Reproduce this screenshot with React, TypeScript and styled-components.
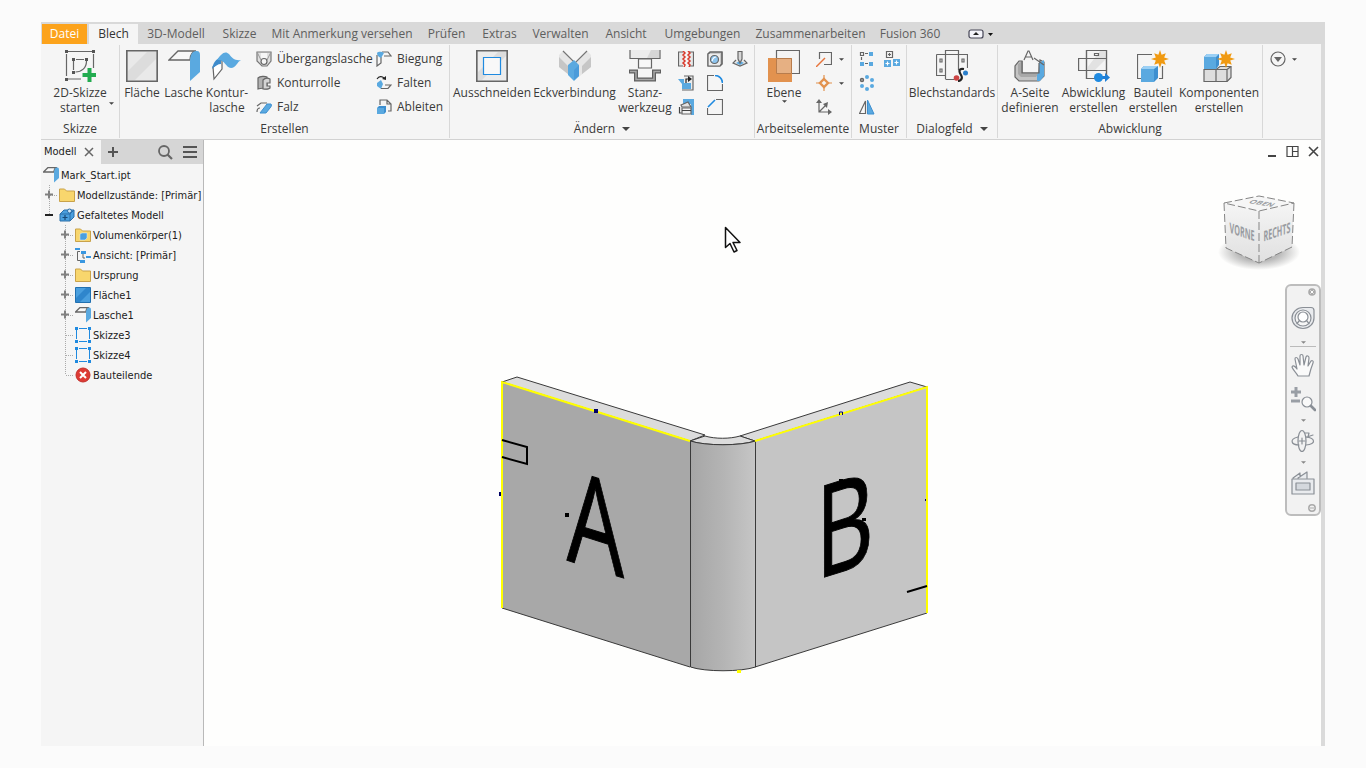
import React from "react";
import styled, { createGlobalStyle } from "styled-components";

const Global = createGlobalStyle`
  *, *::before, *::after { box-sizing: border-box; }
  body { margin: 0; background: #fbfbfb; }
  button { font: inherit; color: inherit; border: 0; padding: 0; background: none; }
  ul { list-style: none; margin: 0; padding: 0; }
`;

const ui = `"Open Sans", "Noto Sans", sans-serif`;
const INK = "#666";
const BLUE = "#5aa9e0";
const ORANGE = "#e2924f";

/* ---------- frame ---------- */

const Page = styled.div`
  min-height: 100vh;
  padding: 22px 41px;
  display: flex;
  font: 12px/16px ${ui};
  color: #3a3a3a;
`;
const AppWindow = styled.div`
  flex: 1;
  min-width: 0;
  display: flex;
  flex-direction: column;
  border-right: 4px solid #dadada;
  background: #fefefd;
`;

/* ---------- tabs ---------- */

const TabBar = styled.nav`
  display: flex;
  height: 22px;
  padding: 2px 0 0 1px;
  margin-right: -4px;
  background: #d9d9d9;
`;
const Tab = styled.button<{ $w: number; $kind?: "file" | "active" }>`
  flex: none;
  width: ${(p) => p.$w}px;
  margin-right: ${(p) => (p.$kind === "file" ? 2 : 0)}px;
  height: 20px;
  line-height: 20px;
  white-space: nowrap;
  color: ${(p) => (p.$kind === "file" ? "#fff" : p.$kind ? "#333" : "#5e5e5e")};
  background: ${(p) => (p.$kind === "file" ? "#fca31c" : p.$kind ? "#f5f5f5" : "transparent")};
`;
const CollapseButton = styled.button`
  margin-left: 20px;
  display: flex;
  align-items: center;
`;

const tabs: [string, number, ("file" | "active")?][] = [
  ["Datei", 45, "file"],
  ["Blech", 49, "active"],
  ["3D-Modell", 76],
  ["Skizze", 51],
  ["Mit Anmerkung versehen", 154],
  ["Prüfen", 55],
  ["Extras", 51],
  ["Verwalten", 71],
  ["Ansicht", 60],
  ["Umgebungen", 93],
  ["Zusammenarbeiten", 123],
  ["Fusion 360", 76],
];

/* ---------- ribbon ---------- */

const Ribbon = styled.div`
  display: flex;
  height: 96px;
  padding: 1px 0;
  background: #f5f5f5;
  border-bottom: 1px solid #d2d2d2;
`;
const Panel = styled.section<{ $w: number }>`
  flex: none;
  width: ${(p) => p.$w}px;
  display: flex;
  flex-direction: column;
  border-right: 1px solid #d8d8d8;
`;
const Tools = styled.div<{ $pad?: number }>`
  flex: 1;
  display: flex;
  align-items: flex-start;
  padding: 5px 0 0 ${(p) => p.$pad ?? 0}px;
`;
const PanelTitle = styled.h2`
  margin: 0;
  height: 18px;
  font: 12px/16px ${ui};
  display: flex;
  justify-content: center;
  align-items: center;
  gap: 7px;
`;
const Big = styled.button<{ $w: number }>`
  flex: none;
  width: ${(p) => p.$w}px;
  display: flex;
  flex-direction: column;
  align-items: center;
  line-height: 15px;
  white-space: pre;
  & > svg { margin-bottom: 3px; }
`;
const MenuArrow = styled.button`
  height: 66px;
  padding-top: 36px;
`;
const SmallCol = styled.div<{ $left?: number; $w?: number }>`
  flex: none;
  display: grid;
  grid-auto-rows: 24px;
  width: ${(p) => (p.$w ? `${p.$w}px` : "auto")};
  margin: -3px 0 0 ${(p) => p.$left ?? 0}px;
`;
const Small = styled.button`
  display: flex;
  align-items: center;
  gap: 5px;
  white-space: nowrap;
`;
const Rest = styled.div`
  display: flex;
  align-items: flex-start;
  gap: 6px;
  padding: 6px 0 0 7px;
`;
const RestCaret = styled.button`
  display: flex;
  align-items: center;
  height: 16px;
`;

const Caret = ({ s = 5, color = "#444" }: { s?: number; color?: string }) => (
  <svg width={s} height={Math.ceil(s / 2)} viewBox="0 0 10 5" aria-hidden="true">
    <path d="M0 0h10L5 5z" fill={color} />
  </svg>
);

type IconProps = { children: React.ReactNode; s?: number };
const Icon = ({ children, s = 32 }: IconProps) => (
  <svg width={s} height={s} viewBox={`0 0 ${s} ${s}`} fill="none" stroke={INK} strokeWidth="1.2" aria-hidden="true">
    {children}
  </svg>
);

const Star = ({ x, y }: { x: number; y: number }) => (
  <path
    transform={`translate(${x} ${y})`}
    stroke="none"
    fill="#f09a12"
    d="M0-9 1.600-4.200 5.800-5.800 4.200-1.600 9 0 4.200 1.600 5.800 5.800 1.600 4.200 0 9-1.600 4.200-5.800 5.800-4.200 1.600-9 0-4.200-1.600-5.800-5.800-1.600-4.200z"
  />
);

const SketchIcon = () => (
  <Icon>
    <path d="M4 1.500h24M2.500 4v22M29.500 4v14M4 29h13M9.500 11v9M12 9.500h8M22.500 11c0 7-5 11-11 11" />
    <g fill="#555" stroke="none">
      <path d="M1 0h3v3H1zM28 0h3v3h-3zM1 28h3v3H1zM8 8h3v3H8zM21 8h3v3h-3zM8 21h3v3H8z" />
    </g>
    <path d="M25.500 18v14M18.500 25h14" stroke="#22ab4f" strokeWidth="4" />
  </Icon>
);
const PlateIcon = () => (
  <Icon>
    <path d="M1 1h30v30H1z" fill="#e9e9e9" />
    <path d="M2 21 21 2h9v7L9 30H2z" fill="#dcdcdc" stroke="none" />
    <path d="M.5.5h31v31H.5z" />
  </Icon>
);
const FlangeIcon = ({ s = 32 }: { s?: number }) => (
  <svg width={s} height={s} viewBox="0 0 32 32" fill="none" stroke={INK} strokeWidth={s > 20 ? 1.3 : 2.6} aria-hidden="true">
    <path d="M1 10 10 1h18c-4 1-6 4-6 9z" fill="#f8f8f8" />
    <path d="M22 12C22 5 24 1 28 1h1q3 0 3 4v17L22 31z" fill={BLUE} stroke="none" />
  </svg>
);
const ContourFlangeIcon = () => (
  <Icon>
    <path d="M2 17 11 9v10L3 29z" fill="#fff" />
    <path d="M1 19C2 13 5 9 10 7v7c-3 0-6 2-9 5z" fill="#3f8ccc" stroke="none" />
    <path d="M6 10c4-6 8-10 12-6 3 4 6 7 12 6-4 2-5 8-10 8-6-1-6-9-14-8z" fill={BLUE} stroke="none" />
  </Icon>
);
const LoftedIcon = () => (
  <Icon s={16}>
    <path d="M1 1h14v9l-4 5H6l-5-5z" fill="#e0e0e0" stroke="#777" />
    <path d="m1 1 4 8M15 1l-4 8" stroke="#999" strokeWidth="1" />
    <path d="M5 2h6v5H5z" fill="#f6f6f6" stroke="none" />
    <circle cx="8" cy="10.500" r="3" fill="#f5f5f5" />
  </Icon>
);
const RollIcon = () => (
  <Icon s={16}>
    <path d="M2 3c2-2 7-2 9-1v12c-3-1-6-1-9 0z" fill="#b2b2b2" />
    <path d="M7 5c2-2 5-2 7-1v4h-3v3h3v2c-2 2-5 1-7 1z" fill="#d4d4d4" />
  </Icon>
);
const HemIcon = () => (
  <Icon s={16}>
    <path d="M1 13c0-2 0-4 3-4M1 7l4-3h6" />
    <path d="m4 14 7-9h4c1 1 0 3-1 4l-4 5z" fill={BLUE} stroke="#3d8fd0" strokeWidth="1" />
  </Icon>
);
const BendIcon = () => (
  <Icon s={16}>
    <path d="M1 4v11l4-3V6M6 1h6l3 4H8" />
    <path d="M1 2c2-2 5-1 7 0L5 7C3 6 1 5 1 2z" fill={BLUE} stroke="none" />
  </Icon>
);
const FoldIcon = () => (
  <Icon s={16}>
    <path d="M1 4c2-3 5-3 7-1" stroke="#222" />
    <path d="M10 5V1L6 4z" fill="#222" stroke="none" />
    <path d="m5 5 2 4-2 5-4-3V8z" fill={BLUE} stroke="none" />
    <path d="M5 13.500h7l3-3.500H9" />
  </Icon>
);
const DeriveIcon = () => (
  <Icon s={16}>
    <path d="M4 6V1h7l4 4v7h-3M11 1v4h4" />
    <path d="m1 9 2-2h7v6l-2 2H1z" fill="#3d8fd0" stroke="none" />
    <path d="M1 9h7v6H1z" fill={BLUE} stroke="none" />
  </Icon>
);
const CutIcon = () => (
  <Icon>
    <path d="M1 1h30v30H1z" fill="#ececec" />
    <path d="M2 22 22 2h8v4L6 30H2z" fill="#dcdcdc" stroke="none" />
    <path d="M.5.5h31v31H.5z" />
    <path d="M7.500 7.500h17v17h-17z" fill="#f8f8f8" stroke="#1f8ae0" />
  </Icon>
);
const CornerIcon = () => (
  <Icon>
    <path d="m0 5 4-4 12 11L28 1l4 4v12L16 30 0 17z" fill="#e6e6e6" stroke="none" />
    <path d="m4 1 12 12L28 1" stroke="#757575" />
    <path d="m0 7 9 9v8l-9-7zM32 7l-9 9v8l9-7z" fill="#c6c6c6" stroke="none" />
    <path d="m9 15 6-5 5 5v11l-5 5-6-6z" fill={BLUE} stroke="none" />
    <path d="m9 15 6 5v10l5-4V15l-5 5" fill="#4a9bda" stroke="none" />
  </Icon>
);
const PunchIcon = () => (
  <Icon>
    <path d="M1 0v8.500h30V0" fill="#ececec" />
    <path d="M9.500 9h13v9h-13z" fill="#f7f7f7" />
    <path d="M22 0h8v8H18z" fill="#d6d6d6" stroke="none" />
    <path d="M0 21.500h7v8h18v-8h7" stroke="#5f5f5f" strokeWidth="4" />
    <path d="M1 21.500h6v8h18v-8h6" stroke="#a8a8a8" strokeWidth="1.500" />
  </Icon>
);
const RipIcon = () => (
  <Icon s={16}>
    <path d="M5 1H.5v14H5M11 1h4.500v14H11" fill="#e8e8e8" />
    <path d="m5 0 2 2-2 2 2 2-2 2 2 2-2 2 2 2-1 2M10 0l2 2-2 2 2 2-2 2 2 2-2 2 2 2-1 2" stroke="#d8392b" strokeWidth="1.500" />
  </Icon>
);
const UnfoldIcon = () => (
  <Icon s={16}>
    <path d="M6 1h9v14H4" fill="#ececec" />
    <path d="M0 4h6v4h7v6H4V9z" fill={BLUE} stroke="none" />
    <path d="M8 8V4h3" stroke="#222" />
    <path d="m10 1 4 3-4 3z" fill="#222" stroke="none" />
  </Icon>
);
const RefoldIcon = () => (
  <Icon s={16}>
    <path d="M5 0h11v16h-3V5H5z" fill={BLUE} stroke="none" />
    <path d="M4 9h9v6H4z" fill="#f3f3f3" />
    <path d="m3 6 7-3 3 5H4z" fill="#e2e2e2" />
    <path d="M4 11.500h9M1.500 8v6h2" stroke="#444" />
  </Icon>
);
const HoleIcon = () => (
  <Icon s={16}>
    <path d="m1 3 2-2h12v12l-2 2H1z" fill="#c9c9c9" />
    <path d="M1 3h12v12H1z" fill="#ececec" stroke="none" />
    <circle cx="7.500" cy="8.500" r="4" fill="#8dc4ee" />
    <path d="M5 10c1-3 2-4 4-4" stroke="#fff" />
    <path d="m1 3 2-2h12v12l-2 2H1z" />
  </Icon>
);
const RoundIcon = () => (
  <Icon s={16}>
    <path d="M7 .5H.5v15h15V9" />
    <path d="M8 .5c4 0 7.500 3 7.500 7.500" stroke="#1f8ae0" strokeWidth="1.600" />
  </Icon>
);
const ChamferIcon = () => (
  <Icon s={16}>
    <path d="M9 .5h6.500v15H.5V9" />
    <path d="m1 8 7-7" stroke="#1f8ae0" strokeWidth="1.600" />
  </Icon>
);
const StampIcon = () => (
  <Icon s={16}>
    <path d="m4 9-3 3 7 3 7-3-3-3" fill="#e8e8e8" />
    <path d="m4 12 4-2 4 2-4 2z" fill={BLUE} stroke="none" />
    <path d="M6 .5h4V8l-2 4-2-4z" fill="#d7d7d7" />
  </Icon>
);
const PlaneIcon = () => (
  <Icon>
    <path d="M8.500.5h23v23h-23z" fill="#f4f4f4" />
    <path d="M0 8h24v24H0z" fill={ORANGE} stroke="none" />
    <path d="M8.500 8.500h15v15h-15z" fill="#e6b083" stroke="#b87c4c" strokeWidth="1" />
  </Icon>
);
const AxisIcon = () => (
  <Icon s={16}>
    <path d="M3.500 8V1.500h12v12H8" />
    <path d="m0 16 9-9" stroke="#e8743b" strokeWidth="1.400" />
  </Icon>
);
const PointIcon = () => (
  <Icon s={16}>
    <path d="M8 0v4M8 12v4M0 8h4M12 8h4" stroke={ORANGE} />
    <path d="m8 4 4 4-4 4-4-4z" stroke={ORANGE} strokeWidth="2.400" />
  </Icon>
);
const UcsIcon = () => (
  <Icon s={16}>
    <path d="M3 3v10h10M3 13l7-7" />
    <path d="M0 4h6L3 0zM12 10v6l4-3zM7 5l4 4 1-6z" fill={INK} stroke="none" />
  </Icon>
);
const RectPatternIcon = () => (
  <Icon s={16}>
    <path d="M1.500 1.500h3v3h-3zM6 2.500h3M2.500 6v3M6 12.500h3" />
    <path d="M10 1h4v4h-4zM1 11h4v4H1zM10 11h4v4h-4z" fill={BLUE} stroke="none" />
  </Icon>
);
const CircPatternIcon = () => (
  <Icon s={16}>
    <circle cx="3" cy="5" r="1.600" fill="#999" />
    <g fill={BLUE} stroke="none">
      <circle cx="8" cy="2" r="2" />
      <circle cx="13" cy="5" r="2" />
      <circle cx="13" cy="11" r="2" />
      <circle cx="8" cy="14" r="2" />
      <circle cx="3" cy="11" r="2" />
    </g>
  </Icon>
);
const MirrorIcon = () => (
  <Icon s={16}>
    <path d="M6.500 2v12.500H.5z" fill="#fafafa" />
    <path d="M8.500 1v14H15z" fill={BLUE} stroke="#3d8fd0" strokeWidth="1" />
  </Icon>
);
const SketchPatternIcon = () => (
  <Icon s={16}>
    <path d="M2.500.5h6v6h-6zM5.500 2v3M4 3.500h3" />
    <path d="M0 9h7v7H0zM9 8h7v7H9z" fill={BLUE} stroke="none" />
    <path d="M3.500 10.500v4M1.500 12.500h4M12.500 9.500v4M10.500 11.500h4" stroke="#fff" />
  </Icon>
);
const StandardsIcon = () => (
  <Icon>
    <path d="M.5 4.500h31V18M.5 4.500v21h9M9.500 29V.5h13V20M9.500 29.500h9" />
    <path d="M4 9h2v3H4zM26 9h2v3h-2zM4 19h2v3H4z" />
    <path d="M28 19c-6-1-5 3-3 6s0 6-3 6" stroke="#222" strokeWidth="2.200" />
    <circle cx="20.500" cy="28" r="2.800" fill="#c44" stroke="none" />
    <circle cx="29.500" cy="23" r="2.500" fill="#2b7fcb" stroke="none" />
  </Icon>
);
const ASideIcon = () => (
  <Icon>
    <path d="M8 11H5l-4 5v11l4 4h20l5-5V12l-4-2-1 13H8z" fill="#c4c4c4" />
    <path d="m4 14 4-3v12h17l-3 4H7l-3-3z" fill="#a8a8a8" stroke="none" />
    <path d="m25 13 5-3v16l-4 5h-3v-6l2-3z" fill={BLUE} stroke="none" />
    <path d="m10 10 4-9h1l4 9M11.500 7h6M20 8l10 7M8 11v12h17V13" />
  </Icon>
);
const FlatIcon = () => (
  <Icon>
    <path d="M8.500.5h20v28h-20zM.5 8.500h28v12H.5z" fill="#f4f4f4" />
    <path d="M22 1h6v8L17 20H9v-2z" fill="#e2e2e2" stroke="none" />
    <path d="M8.500.5h20v28h-20zM.5 8.500h28v12H.5zM16.500 3.500h4v2h-4z" />
    <path d="M21 27.500h6" stroke="#1f7fd6" strokeWidth="3" />
    <circle cx="20.500" cy="27.500" r="4.500" fill="#1f8ae0" stroke="none" />
    <path d="M27 23v9l5-4.500z" fill="#1f7fd6" stroke="none" />
  </Icon>
);
const PartIcon = () => (
  <Icon>
    <path d="M15 4.500H.5v24H4M25.500 16v12.500H22" />
    <path d="m4 19 3-3h14v12l-4 4H4z" fill="#3d8fd0" stroke="none" />
    <path d="M4 19h13v13H4z" fill={BLUE} stroke="none" />
    <path d="m4 19 3-3h14l-4 3z" fill="#9bd0f5" stroke="none" />
    <Star x={23} y={9} />
  </Icon>
);
const ComponentsIcon = () => (
  <Icon>
    <path d="M1 19.500h12v12H1zM13 19.500l4-3h11v11l-4 4H13z" fill="#dedede" />
    <path d="M13 19.500h11v12M24 19.500l4-3" />
    <path d="m1 7 3-3h12v11l-3 4H1z" fill="#3d8fd0" stroke="none" />
    <path d="M1 7h12v12H1z" fill={BLUE} stroke="none" />
    <path d="m1 7 3-3h12l-3 3z" fill="#9bd0f5" stroke="none" />
    <Star x={23} y={9} />
  </Icon>
);

const ArrowRow = styled.div`
  display: flex;
  align-items: center;
  gap: 7px;
`;
const MenuBtn = styled.button`
  display: flex;
`;

const RibbonPanels = () => (
  <Ribbon>
    <Panel $w={79}>
      <Tools $pad={10}>
        <Big $w={58}>
          <SketchIcon />
          {"2D-Skizze\nstarten"}
        </Big>
        <MenuArrow aria-label="Skizzenmenü"><Caret /></MenuArrow>
      </Tools>
      <PanelTitle>Skizze</PanelTitle>
    </Panel>
    <Panel $w={330}>
      <Tools $pad={2}>
        <Big $w={40}><PlateIcon />Fläche</Big>
        <Big $w={43}><FlangeIcon />Lasche</Big>
        <Big $w={44}><ContourFlangeIcon />{"Kontur-\nlasche"}</Big>
        <SmallCol $left={7} $w={113}>
          <Small><LoftedIcon />Übergangslasche</Small>
          <Small><RollIcon />Konturrolle</Small>
          <Small><HemIcon />Falz</Small>
        </SmallCol>
        <SmallCol $left={7}>
          <Small><BendIcon />Biegung</Small>
          <Small><FoldIcon />Falten</Small>
          <Small><DeriveIcon />Ableiten</Small>
        </SmallCol>
      </Tools>
      <PanelTitle>Erstellen</PanelTitle>
    </Panel>
    <Panel $w={305}>
      <Tools $pad={2}>
        <Big $w={80}><CutIcon />Ausschneiden</Big>
        <Big $w={85}><CornerIcon />Eckverbindung</Big>
        <Big $w={56}><PunchIcon />{"Stanz-\nwerkzeug"}</Big>
        <SmallCol $left={5}>
          <Small aria-label="Trennen"><RipIcon /></Small>
          <Small aria-label="Auffalten"><UnfoldIcon /></Small>
          <Small aria-label="Zurückfalten"><RefoldIcon /></Small>
        </SmallCol>
        <SmallCol $left={13}>
          <Small aria-label="Bohrung"><HoleIcon /></Small>
          <Small aria-label="Eckenrundung"><RoundIcon /></Small>
          <Small aria-label="Eckenfase"><ChamferIcon /></Small>
        </SmallCol>
        <SmallCol $left={9}>
          <Small aria-label="Markierung"><StampIcon /></Small>
        </SmallCol>
      </Tools>
      <PanelTitle>Ändern <Caret s={8} /></PanelTitle>
    </Panel>
    <Panel $w={97}>
      <Tools $pad={9}>
        <Big $w={40}><PlaneIcon />Ebene<Caret /></Big>
        <SmallCol $left={12}>
          <ArrowRow>
            <Small aria-label="Achse"><AxisIcon /></Small>
            <MenuBtn aria-label="Achsenmenü"><Caret /></MenuBtn>
          </ArrowRow>
          <ArrowRow>
            <Small aria-label="Punkt"><PointIcon /></Small>
            <MenuBtn aria-label="Punktmenü"><Caret /></MenuBtn>
          </ArrowRow>
          <Small aria-label="Benutzerkoordinatensystem"><UcsIcon /></Small>
        </SmallCol>
      </Tools>
      <PanelTitle>Arbeitselemente</PanelTitle>
    </Panel>
    <Panel $w={55}>
      <Tools $pad={7}>
        <SmallCol>
          <Small aria-label="Rechteckige Anordnung"><RectPatternIcon /></Small>
          <Small aria-label="Runde Anordnung"><CircPatternIcon /></Small>
          <Small aria-label="Spiegeln"><MirrorIcon /></Small>
        </SmallCol>
        <SmallCol $left={9}>
          <Small aria-label="Skizzenanordnung"><SketchPatternIcon /></Small>
        </SmallCol>
      </Tools>
      <PanelTitle>Muster</PanelTitle>
    </Panel>
    <Panel $w={91}>
      <Tools $pad={2}>
        <Big $w={86}><StandardsIcon />Blechstandards</Big>
      </Tools>
      <PanelTitle>Dialogfeld <Caret s={8} /></PanelTitle>
    </Panel>
    <Panel $w={265}>
      <Tools $pad={3}>
        <Big $w={58}><ASideIcon />{"A-Seite\ndefinieren"}</Big>
        <Big $w={69}><FlatIcon />{"Abwicklung\nerstellen"}</Big>
        <Big $w={50}><PartIcon />{"Bauteil\nerstellen"}</Big>
        <Big $w={82}><ComponentsIcon />{"Komponenten\nerstellen"}</Big>
      </Tools>
      <PanelTitle>Abwicklung</PanelTitle>
    </Panel>
    <Rest>
      <MenuBtn aria-label="Anzeigeoptionen">
        <Icon s={16}>
          <circle cx="8" cy="8" r="7" />
          <path d="M4 6h8l-4 5z" fill={INK} stroke="none" />
        </Icon>
      </MenuBtn>
      <RestCaret aria-label="Weitere Befehle"><Caret /></RestCaret>
    </Rest>
  </Ribbon>
);

/* ---------- browser panel ---------- */

const Body = styled.div`
  flex: 1;
  display: flex;
  min-height: 0;
`;
const Side = styled.aside`
  flex: none;
  width: 163px;
  border-right: 1px solid #b9b9b9;
  background: #f5f5f5;
  font: 11px/20px "DejaVu Sans Condensed", "DejaVu Sans", sans-serif;
  color: #1c1c1c;
`;
const SideTabs = styled.div`
  display: flex;
  height: 24px;
  background: #d6d6d6;
`;
const SideTab = styled.div`
  display: flex;
  align-items: center;
  width: 60px;
  padding-left: 3px;
  gap: 8px;
  background: #f5f5f5;
`;
const IconBtn = styled.button<{ $left?: number }>`
  display: flex;
  align-items: center;
  margin-left: ${(p) => p.$left ?? 0}px;
`;
const Tree = styled.ul`
  padding-top: 1px;
`;
const TreeRow = styled.li<{ $indent: number }>`
  display: flex;
  align-items: center;
  height: 20px;
  padding-left: ${(p) => p.$indent}px;
  white-space: nowrap;
`;
const TreeLabel = styled.span`
  padding: 1px 0 0 2px;
`;

type Mark = "plus" | "minus" | "none" | "end";
const Guide = ({ mark }: { mark: Mark }) => (
  <svg width="18" height="20" viewBox="0 0 18 20" fill="none" aria-hidden="true">
    <path d={mark === "end" || mark === "minus" ? "M8.500 0v10" : "M8.500 0v20"} stroke="#aaa" strokeDasharray="1 1" />
    {mark !== "minus" && <path d="M9 10.500h8" stroke="#aaa" strokeDasharray="1 1" />}
    {mark === "plus" && <path d="M4 9.500h8M8 5.500v8" stroke="#808080" strokeWidth="2" />}
    {mark === "minus" && <path d="M4 10h8" stroke="#222" strokeWidth="2" />}
  </svg>
);

const FolderIcon = ({ cube }: { cube?: boolean }) => (
  <Icon s={16}>
    <path d="M.5 2h5l2 2h8v10.500H.5z" fill="#f8d66d" stroke="#c9a24a" strokeWidth="1" />
    {cube && <path d="m5 7 2-1h5v5l-2 2H5z" fill="#4a9fde" stroke="#d9efff" strokeWidth="0.500" />}
  </Icon>
);
const FoldedIcon = () => (
  <Icon s={16}>
    <path d="m1 7 4-4h10v7l-4 4H1z" fill="#4a9fde" stroke="#2b6ea8" strokeWidth="1" />
    <path d="M1 7h10v7M11 7l4-4" stroke="#2b6ea8" strokeWidth="1" />
    <path d="M6 8v5M3.500 10.500h5" stroke="#174a78" />
    <circle cx="10.500" cy="4" r="2" fill="#cfe7f8" stroke="#2b6ea8" strokeWidth="1" />
  </Icon>
);
const ViewIcon = () => (
  <Icon s={16}>
    <path d="M5 4.500H2.500v9H5M8 6v5h2" strokeWidth="1" />
    <path d="M0 1h5v2H0zM6 4h5v3H6zM11 9h5v2h-5zM5 13h5v3H5z" fill="#3a97e0" stroke="none" />
  </Icon>
);
const FaceIcon = () => (
  <Icon s={16}>
    <path d="M.5.5h15v15H.5z" fill="#4a9fde" stroke="#2170b0" strokeWidth="1" />
    <path d="M1 11 11 1h4v4L5 15H1z" fill="#2f86cc" stroke="none" />
  </Icon>
);
const SketchNodeIcon = () => (
  <Icon s={16}>
    <path d="M1.500 3v9M14.500 3v9M4 1.500h8M4 14.500h8" stroke="#1f8ae0" strokeWidth="1" />
    <path d="M0 0h3v3H0zM13 0h3v3h-3zM0 13h3v3H0zM13 13h3v3h-3z" fill="#1f8ae0" stroke="none" />
  </Icon>
);
const EndIcon = () => (
  <Icon s={16}>
    <circle cx="8" cy="8" r="7" fill="#dd3a34" stroke="#c22f2a" strokeWidth="1" />
    <path d="m5 5 6 6M11 5l-6 6" stroke="#fff" strokeWidth="2" />
  </Icon>
);

const nodes: { label: string; level: 1 | 2; mark: Mark; icon: React.ReactNode }[] = [
  { label: "Modellzustände: [Primär]", level: 1, mark: "plus", icon: <FolderIcon /> },
  { label: "Gefaltetes Modell", level: 1, mark: "minus", icon: <FoldedIcon /> },
  { label: "Volumenkörper(1)", level: 2, mark: "plus", icon: <FolderIcon cube /> },
  { label: "Ansicht: [Primär]", level: 2, mark: "plus", icon: <ViewIcon /> },
  { label: "Ursprung", level: 2, mark: "plus", icon: <FolderIcon /> },
  { label: "Fläche1", level: 2, mark: "plus", icon: <FaceIcon /> },
  { label: "Lasche1", level: 2, mark: "plus", icon: <FlangeIcon s={16} /> },
  { label: "Skizze3", level: 2, mark: "none", icon: <SketchNodeIcon /> },
  { label: "Skizze4", level: 2, mark: "none", icon: <SketchNodeIcon /> },
  { label: "Bauteilende", level: 2, mark: "end", icon: <EndIcon /> },
];

const Browser = () => (
  <Side>
    <SideTabs>
      <SideTab>
        Modell
        <IconBtn aria-label="Schließen">
          <svg width="10" height="10" viewBox="0 0 10 10" stroke="#666" strokeWidth="1.500"><path d="m1 1 8 8M9 1 1 9" /></svg>
        </IconBtn>
      </SideTab>
      <IconBtn $left={7} aria-label="Hinzufügen">
        <svg width="10" height="10" viewBox="0 0 10 10" stroke="#555" strokeWidth="2"><path d="M5 0v10M0 5h10" /></svg>
      </IconBtn>
      <IconBtn $left={39} aria-label="Suchen">
        <svg width="16" height="16" viewBox="0 0 16 16" fill="none" stroke="#666" strokeWidth="1.800"><circle cx="7" cy="7" r="5" /><path d="m10.500 10.500 4.500 4.500" strokeWidth="2.200" /></svg>
      </IconBtn>
      <IconBtn $left={10} aria-label="Menü">
        <svg width="14" height="12" viewBox="0 0 14 12" stroke="#555" strokeWidth="2"><path d="M0 1h14M0 6h14M0 11h14" /></svg>
      </IconBtn>
    </SideTabs>
    <Tree>
      <TreeRow $indent={2}><FlangeIcon s={16} /><TreeLabel>Mark_Start.ipt</TreeLabel></TreeRow>
      {nodes.map((n) => (
        <TreeRow key={n.label} $indent={n.level === 2 ? 16 : 0}>
          <Guide mark={n.mark} />
          {n.icon}
          <TreeLabel>{n.label}</TreeLabel>
        </TreeRow>
      ))}
    </Tree>
  </Side>
);

/* ---------- viewport ---------- */

const Viewport = styled.main`
  flex: 1;
  min-width: 0;
  position: relative;
  overflow: hidden;
`;
const WindowButtons = styled.div`
  display: flex;
  justify-content: flex-end;
  align-items: center;
  gap: 9px;
  height: 24px;
  padding-right: 2px;
`;
const Model = styled.svg`
  position: absolute;
  left: 294px;
  top: 230px;
`;
const Cube = styled.svg`
  position: absolute;
  right: 21px;
  top: 50px;
`;
const Pointer = styled.svg`
  position: absolute;
  left: 520px;
  top: 86px;
`;
const NavBar = styled.div`
  position: absolute;
  right: 0;
  top: 144px;
  width: 36px;
  height: 232px;
  padding-top: 2px;
  display: flex;
  flex-direction: column;
  align-items: center;
  border: 2px solid #bdbdbd;
  border-radius: 6px;
  background: #f2f2f2;
`;
const NavButton = styled.button<{ $h: number }>`
  flex: none;
  display: flex;
  align-items: center;
  justify-content: center;
  width: 28px;
  height: ${(p) => p.$h}px;
`;
const NavRule = styled.hr`
  width: 26px;
  margin: 0;
  border: 0;
  border-top: 1px solid #bbb;
`;

const NavIcon = ({ children }: { children: React.ReactNode }) => (
  <svg width="26" height="26" viewBox="0 0 26 26" fill="none" stroke="#8a8f96" strokeWidth="1.200" strokeLinejoin="round" strokeLinecap="round" aria-hidden="true">
    {children}
  </svg>
);

const Navigation = () => (
  <NavBar>
    <NavButton $h={8} aria-label="Leiste schließen">
      <svg width="28" height="8" viewBox="0 0 28 8"><circle cx="23" cy="4" r="3.800" fill="#aaa" /><path d="m21.500 2.500 3 3m0-3-3 3" stroke="#fff" /></svg>
    </NavButton>
    <NavButton $h={43} aria-label="Navigationsrad">
      <NavIcon>
        <path d="M13 2.500h8q3 0 3 3V13A11 10.500 0 1 1 13 2.500z" fill="#e9ebee" />
        <circle cx="13" cy="13" r="8" fill="#f6f6f6" />
        <circle cx="13" cy="12" r="5" fill="#fff" />
        <path d="m9.500 15.500-2.500 3M16.500 15.500l2.500 3" />
      </NavIcon>
    </NavButton>
    <NavButton $h={7} aria-label="Radmenü"><Caret color="#888" /></NavButton>
    <NavRule />
    <NavButton $h={36} aria-label="Pan">
      <NavIcon>
        <path d="M8 24C6 20 3 18 2 15c1-2 3-1 5 2L5 7c0-2 2-2 3 0l2 6V4c0-2 3-2 3 0l1 9 2-8c1-2 3-1 3 1l-1 8 3-5c1-1 3 0 2 2-2 5-3 9-4 13z" fill="#fafafa" />
      </NavIcon>
    </NavButton>
    <NavButton $h={32} aria-label="Zoom">
      <NavIcon>
        <path d="M1 6h10M6 1v10M1 15h9" strokeWidth="3" strokeLinecap="butt" stroke="#999ea5" />
        <circle cx="17" cy="16" r="5" fill="#f9f9f9" />
        <path d="m21 20 4 4" strokeWidth="2.600" />
      </NavIcon>
    </NavButton>
    <NavButton $h={10} aria-label="Zoommenü"><Caret color="#888" /></NavButton>
    <NavButton $h={32} aria-label="Orbit">
      <NavIcon>
        <ellipse cx="12" cy="13" rx="4" ry="10.500" />
        <path d="M8 9C-1 11 1 17 9 17M16 17c11-1 9-7 0-8M12 10v6M9 13h6" />
        <path d="m15 5 4 0-1 4M17 9l6-2" />
      </NavIcon>
    </NavButton>
    <NavButton $h={10} aria-label="Orbitmenü"><Caret color="#888" /></NavButton>
    <NavButton $h={32} aria-label="Ansichtsfläche">
      <NavIcon>
        <path d="M2 9h22v15H2zM3 8l7-5v4M8 8l9-6v6" fill="#e9ebee" />
        <path d="M6 13h14v7H6z" fill="#d4d8dd" />
      </NavIcon>
    </NavButton>
    <NavButton $h={18} aria-label="Leistenoptionen">
      <svg width="28" height="8" viewBox="0 0 28 8"><circle cx="23" cy="4" r="3.200" fill="none" stroke="#aaa" strokeWidth="1.500" /><path d="M21 4h4" stroke="#aaa" /></svg>
    </NavButton>
  </NavBar>
);

const ViewCube = () => (
  <Cube width="82" height="84" viewBox="1218 190 82 84" role="img" aria-label="ViewCube">
    <defs>
      <radialGradient id="cubeShadow">
        <stop offset="0.5" stopColor="#9a9a9a" stopOpacity="0.7" />
        <stop offset="1" stopColor="#9a9a9a" stopOpacity="0" />
      </radialGradient>
      <linearGradient id="cubeSide" x1="0" y1="0" x2="0" y2="1">
        <stop offset="0" stopColor="#f5f5f5" />
        <stop offset="1" stopColor="#e0e0e0" />
      </linearGradient>
    </defs>
    <ellipse cx="1259" cy="252" rx="41" ry="18" fill="url(#cubeShadow)" />
    <path d="m1224 203 35 8v52l-33-15z" fill="url(#cubeSide)" />
    <path d="m1294 203-35 8v52l33-16z" fill="url(#cubeSide)" />
    <path d="m1259 196 35 7-35 8-35-8z" fill="#f6f6f6" />
    <g fill="none" stroke="#858585" strokeDasharray="8 3">
      <path d="m1224 203 35-7 35 7-35 8zM1224 203l2 45 33 15 33-16 2-44M1259 211v52" />
    </g>
    <g fontFamily="Open Sans, sans-serif" fontWeight="700" fontSize="12" fill="#999ca1" textAnchor="middle">
      <text transform="matrix(.6 .2 0 1.200 1242 237)">VORNE</text>
      <text transform="matrix(.6 -.2 0 1.200 1277 237)">RECHTS</text>
      <text transform="matrix(.7 .12 -.5 .4 1260 205)">OBEN</text>
    </g>
  </Cube>
);

/* Each wall is drawn flat and projected onto its plane, so its letter follows the view angle. */
const SheetPart = () => (
  <Model width="430" height="310" viewBox="498 370 430 310" role="img" aria-label="Abgekantetes Blech">
    <defs>
      <linearGradient id="bend">
        <stop offset="0" stopColor="#a6a6a6" />
        <stop offset="0.5" stopColor="#b4b4b4" />
        <stop offset="1" stopColor="#c6c6c6" />
      </linearGradient>
    </defs>
    <g fill="#dcdcdc" stroke="#3a3a3a">
      <path d="m502 382 15-5 188 58-15 6z" />
      <path d="m927 387-17-5-170 54 15 5z" />
      <path d="M690 441l15-5c10 3 25 3 35 0l15 5c-15 5-50 5-65 0z" />
    </g>
    <g fontFamily="Open Sans, sans-serif" fontSize="128" fill="#000" textAnchor="middle">
      <g transform="matrix(.707 .222 0 1 502 382)">
        <rect width="266" height="226" fill="#a8a8a8" />
        <text x="132" y="158" stroke="#000" strokeWidth="1">A</text>
      </g>
      <g transform="matrix(.707 -.222 0 1 755 441)">
        <rect width="243" height="226" fill="#c5c5c5" />
        <text x="127" y="158" stroke="#000" strokeWidth="1">B</text>
      </g>
    </g>
    <path d="M690.500 441c15 5 50 5 65 0v226c-15 5-50 5-65 0z" fill="url(#bend)" stroke="#3a3a3a" />
    <path d="m502 608 188 59M755 667l172-54" stroke="#3a3a3a" />
    <path d="M502 608V382l188 59M755 441l172-54v226" fill="none" stroke="#ff0" strokeWidth="2" />
    <path d="m502 440 25 7v17l-25-7M907 592l20-6" fill="none" stroke="#000" strokeWidth="2" />
    <path d="M565 513h4v4h-4zM593 478h4v4h-4zM839 479h4v4h-4zM862 518h4v3h-4z" fill="#000" />
    <path d="M594 409h4v4h-4zM499 492h2v4h-2z" fill="#006" />
    <path d="M839.500 415v-3h3v3M925.500 499v2" fill="none" stroke="#006" />
    <path d="M737 670h4v3h-4z" fill="#ff0" />
  </Model>
);

export default function App() {
  return (
    <>
      <Global />
      <Page>
        <AppWindow>
          <TabBar>
            {tabs.map(([name, w, kind]) => (
              <Tab key={name} $w={w} $kind={kind}>{name}</Tab>
            ))}
            <CollapseButton aria-label="Menüband minimieren">
              <svg width="25" height="10" viewBox="0 0 25 10">
                <rect x="1" y="1" width="14" height="8" rx="2" fill="#f4f4fa" stroke="#445" strokeWidth="1.200" />
                <path d="m5 6 3-3 3 3z" fill="#222" />
                <path d="M20 4h5l-2.500 3z" fill="#111" />
              </svg>
            </CollapseButton>
          </TabBar>
          <RibbonPanels />
          <Body>
            <Browser />
            <Viewport>
              <WindowButtons>
                <IconBtn aria-label="Minimieren">
                  <svg width="10" height="12" viewBox="0 0 10 12"><path d="M1 10h8" stroke="#444" strokeWidth="2" /></svg>
                </IconBtn>
                <IconBtn aria-label="Anordnen">
                  <svg width="13" height="12" viewBox="0 0 13 12" fill="none" stroke="#444"><path d="M1 .5h11v10H1zM6.500 1v10M7 5.500h5" strokeWidth="1.200" /></svg>
                </IconBtn>
                <IconBtn aria-label="Schließen">
                  <svg width="11" height="12" viewBox="0 0 11 12" stroke="#444" strokeWidth="1.600"><path d="m1 1 9 9M10 1l-9 9" /></svg>
                </IconBtn>
              </WindowButtons>
              <SheetPart />
              <ViewCube />
              <Navigation />
              <Pointer width="18" height="28" viewBox="0 0 18 28" aria-hidden="true">
                <path d="M1.500 1.500v20l4.500-4 4 8.500 3-1.500-4-8h7z" fill="#fff" stroke="#111" strokeWidth="1.500" strokeLinejoin="round" />
              </Pointer>
            </Viewport>
          </Body>
        </AppWindow>
      </Page>
    </>
  );
}
